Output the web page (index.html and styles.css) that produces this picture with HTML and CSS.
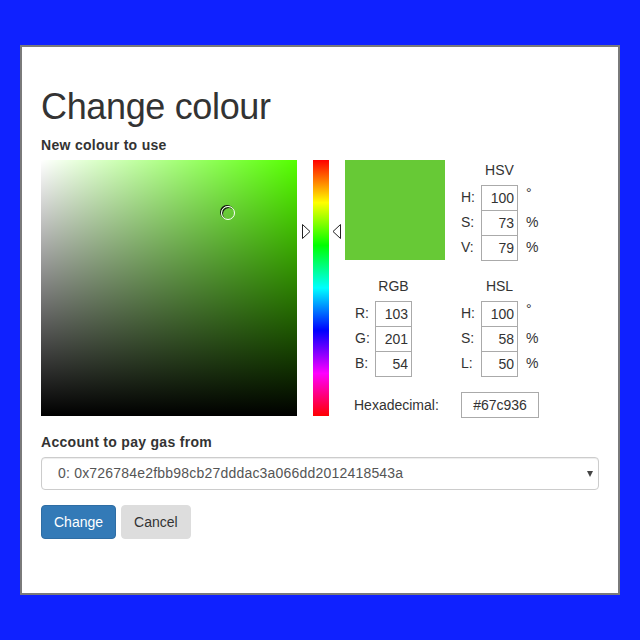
FILE: index.html
```html
<!DOCTYPE html>
<html lang="en">
<head>
  <meta charset="UTF-8" />
  <meta name="viewport" content="width=device-width, initial-scale=1.0"/>
  <title>Change colour</title>
  <link rel="stylesheet" href="styles.css">
</head>
<body>
  <div class="dialog">
    <h1>Change colour</h1>
    <label class="field-label">New colour to use</label>

    <div class="picker">
      <div class="sat-box">
        <div class="sat-cursor" style="left: 73%; top: 21%;"></div>
      </div>

      <div class="hue-wrap">
        <div class="hue-bar"></div>
        <svg class="hue-arrow left" style="top: 64px;" width="9" height="15" viewBox="0 0 9 15">
          <polygon points="0.5,0.5 8,7.5 0.5,14.5" fill="#fff" stroke="#222" stroke-width="1"/>
        </svg>
        <svg class="hue-arrow right" style="top: 64px;" width="9" height="15" viewBox="0 0 9 15">
          <polygon points="8.5,0.5 1,7.5 8.5,14.5" fill="#fff" stroke="#222" stroke-width="1"/>
        </svg>
      </div>

      <div class="values">
        <div class="swatch"></div>

        <div class="channels">
          <div class="channels-title">HSV</div>
          <span class="ch-label">H:</span><input class="ch-input" value="100"><span class="ch-unit deg">°</span>
          <span class="ch-label">S:</span><input class="ch-input" value="73"><span class="ch-unit">%</span>
          <span class="ch-label">V:</span><input class="ch-input" value="79"><span class="ch-unit">%</span>
        </div>

        <div class="channels rgb">
          <div class="channels-title">RGB</div>
          <span class="ch-label">R:</span><input class="ch-input" value="103"><span class="ch-unit"></span>
          <span class="ch-label">G:</span><input class="ch-input" value="201"><span class="ch-unit"></span>
          <span class="ch-label">B:</span><input class="ch-input" value="54"><span class="ch-unit"></span>
        </div>

        <div class="channels">
          <div class="channels-title">HSL</div>
          <span class="ch-label">H:</span><input class="ch-input" value="100"><span class="ch-unit deg">°</span>
          <span class="ch-label">S:</span><input class="ch-input" value="58"><span class="ch-unit">%</span>
          <span class="ch-label">L:</span><input class="ch-input" value="50"><span class="ch-unit">%</span>
        </div>

        <div class="hex-label">Hexadecimal:</div>
        <div><input class="hex-input" value="#67c936"></div>
      </div>
    </div>

    <label class="field-label account-label">Account to pay gas from</label>
    <div class="select-wrap">
      <select class="form-control">
        <option>0: 0x726784e2fbb98cb27dddac3a066dd2012418543a</option>
      </select>
    </div>

    <div class="actions">
      <button class="btn btn-primary">Change</button>
      <button class="btn btn-default">Cancel</button>
    </div>
  </div>
</body>
</html>
```

FILE: styles.css
```css
body {
  margin: 0;
  background: #0f21ff;
  font-family: 'Liberation Sans', Arial, sans-serif;
  font-size: 14px;
  line-height: 20px;
  color: #333;
}

.dialog {
  margin: 45px 20px 0;
  width: 600px;
  height: 550px;
  box-sizing: border-box;
  background: #fff;
  border: 2px solid #7a7a7a;
  padding: 20px 20px 0 19px;
}

h1 {
  margin: 20px 0 8px;
  font-size: 36px;
  font-weight: 500;
  line-height: 39.6px;
  letter-spacing: -0.35px;
  color: #333;
}

.field-label {
  display: block;
  font-weight: bold;
  letter-spacing: 0.3px;
  margin-bottom: 5px;
}

/* colour picker */
.picker {
  display: flex;
  gap: 16px;
  align-items: flex-start;
}

.sat-box {
  position: relative;
  width: 256px;
  height: 256px;
  background-color: #55ff00;
  background-image:
    linear-gradient(to bottom, rgba(0, 0, 0, 0), #000),
    linear-gradient(to right, #fff, rgba(255, 255, 255, 0));
}

.sat-cursor {
  position: absolute;
  width: 12px;
  height: 12px;
  margin: -7px 0 0 -7px;
  border: 1px solid #fff;
  border-radius: 50%;
  box-shadow: inset 1px 1px 0 #111, -1px -1px 0 #111;
}

.hue-wrap {
  position: relative;
  width: 16px;
  height: 256px;
}

.hue-bar {
  width: 16px;
  height: 256px;
  background: linear-gradient(to bottom, #f00 0%, #ff0 16.66%, #0f0 33.33%, #0ff 50%, #00f 66.66%, #f0f 83.33%, #f00 100%);
}

.hue-arrow {
  position: absolute;
}

.hue-arrow.left {
  left: -11px;
}

.hue-arrow.right {
  right: -12px;
}

.values {
  display: grid;
  grid-template-columns: 100px auto;
  column-gap: 16px;
  row-gap: 16px;
  align-items: start;
}

.swatch {
  width: 100px;
  height: 100px;
  background: #67c936;
}

.channels {
  display: grid;
  grid-template-columns: 20px 37px auto;
  grid-auto-rows: 25px;
}

.channels.rgb {
  padding-left: 10px;
}

/* title spans label + input columns, centred over the input */
.channels-title {
  grid-column: 1 / 3;
  grid-row: 1;
  padding-left: 20px;
  text-align: center;
  line-height: 20px;
}

.ch-label {
  grid-column: 1;
  line-height: 25px;
}

.ch-input,
.hex-input {
  box-sizing: border-box;
  height: 26px;
  border: 1px solid #aaa;
  border-radius: 0;
  font-family: inherit;
  font-size: 14px;
  color: #333;
  margin: 0;
  outline: none;
}

.ch-input {
  grid-column: 2;
  width: 37px;
  padding: 0 3px 0 0;
  text-align: right;
}

.ch-unit {
  grid-column: 3;
  padding-left: 8px;
  line-height: 25px;
}

.ch-unit.deg {
  line-height: 16px;
}

.hex-label {
  padding-left: 9px;
  line-height: 26px;
}

.hex-input {
  width: 78px;
  padding: 0;
  text-align: center;
}

/* form */
.account-label {
  margin-top: 14px;
}

.select-wrap {
  position: relative;
  width: 558px;
}

.select-wrap::after {
  content: "";
  position: absolute;
  right: 6px;
  top: 14px;
  border-left: 3px solid transparent;
  border-right: 3px solid transparent;
  border-top: 6px solid #444;
}

.form-control {
  appearance: none;
  -webkit-appearance: none;
  display: block;
  width: 100%;
  height: 33px;
  padding: 0 12px 0 16px;
  font-family: inherit;
  font-size: 14px;
  letter-spacing: 0.2px;
  color: #555;
  background: #fff;
  border: 1px solid #ccc;
  border-radius: 4px;
  box-shadow: inset 0 1px 1px rgba(0, 0, 0, 0.075);
}

.actions {
  margin-top: 15px;
  display: flex;
  gap: 5px;
}

.btn {
  height: 34px;
  padding: 6px 12px;
  font-family: inherit;
  font-size: 14px;
  line-height: 20px;
  border: 1px solid transparent;
  border-radius: 4px;
  cursor: pointer;
}

.btn-primary {
  background-color: #337ab7;
  border-color: #2e6da4;
  color: #fff;
}

.btn-default {
  background-color: #ddd;
  border-color: #ddd;
  color: #333;
}
```
